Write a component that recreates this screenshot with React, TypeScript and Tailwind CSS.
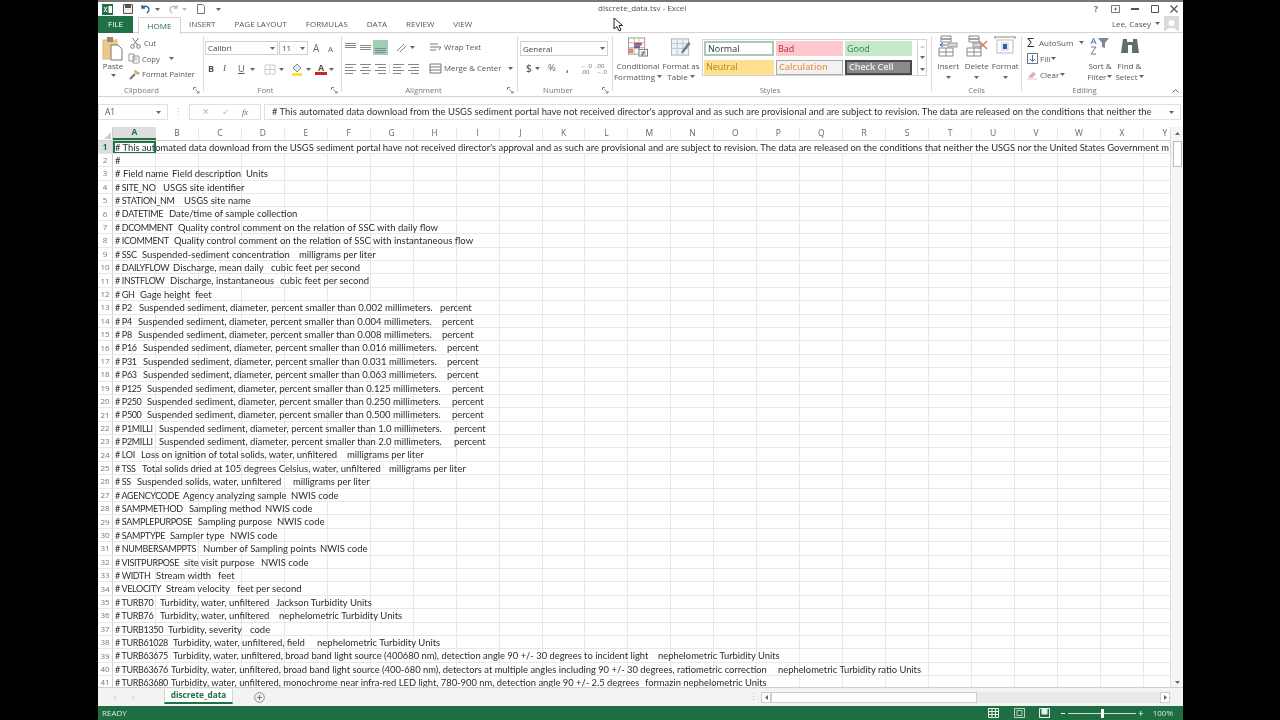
import React from "react";

type Seg = [number, string];
const S = "Suspended sediment, diameter, percent smaller than ";
const ROWS: Seg[][] = [
  [[115, "# This automated data download from the USGS sediment portal have not received director's approval and as such are provisional and are subject to revision. The data are released on the conditions that neither the USGS nor the United States Government m"]],
  [[115, "#"]],
  [[115, "# Field name"], [172, "Field description"], [246, "Units"]],
  [[115, "# SITE_NO"], [163, "USGS site identifier"]],
  [[115, "# STATION_NM"], [184, "USGS site name"]],
  [[115, "# DATETIME"], [169, "Date/time of sample collection"]],
  [[115, "# DCOMMENT"], [178, "Quality control comment on the relation of SSC with daily flow"]],
  [[115, "# ICOMMENT"], [174, "Quality control comment on the relation of SSC with instantaneous flow"]],
  [[115, "# SSC"], [142, "Suspended-sediment concentration"], [299, "milligrams per liter"]],
  [[115, "# DAILYFLOW"], [173, "Discharge, mean daily"], [271, "cubic feet per second"]],
  [[115, "# INSTFLOW"], [170, "Discharge, instantaneous"], [280, "cubic feet per second"]],
  [[115, "# GH"], [140, "Gage height"], [195, "feet"]],
  [[115, "# P2"], [139, S + "0.002 millimeters."], [440, "percent"]],
  [[115, "# P4"], [138, S + "0.004 millimeters."], [442, "percent"]],
  [[115, "# P8"], [138, S + "0.008 millimeters."], [442, "percent"]],
  [[115, "# P16"], [143, S + "0.016 millimeters."], [447, "percent"]],
  [[115, "# P31"], [143, S + "0.031 millimeters."], [447, "percent"]],
  [[115, "# P63"], [143, S + "0.063 millimeters."], [447, "percent"]],
  [[115, "# P125"], [147, S + "0.125 millimeters."], [452, "percent"]],
  [[115, "# P250"], [147, S + "0.250 millimeters."], [452, "percent"]],
  [[115, "# P500"], [147, S + "0.500 millimeters."], [452, "percent"]],
  [[115, "# P1MILLI"], [159, S + "1.0 millimeters."], [454, "percent"]],
  [[115, "# P2MILLI"], [159, S + "2.0 millimeters."], [454, "percent"]],
  [[115, "# LOI"], [141, "Loss on ignition of total solids, water, unfiltered"], [347, "milligrams per liter"]],
  [[115, "# TSS"], [142, "Total solids dried at 105 degrees Celsius, water, unfiltered"], [389, "milligrams per liter"]],
  [[115, "# SS"], [137, "Suspended solids, water, unfiltered"], [293, "milligrams per liter"]],
  [[115, "# AGENCYCODE"], [183, "Agency analyzing sample"], [291, "NWIS code"]],
  [[115, "# SAMPMETHOD"], [189, "Sampling method"], [265, "NWIS code"]],
  [[115, "# SAMPLEPURPOSE"], [198, "Sampling purpose"], [277, "NWIS code"]],
  [[115, "# SAMPTYPE"], [170, "Sampler type"], [230, "NWIS code"]],
  [[115, "# NUMBERSAMPPTS"], [203, "Number of Sampling points"], [320, "NWIS code"]],
  [[115, "# VISITPURPOSE"], [184, "site visit purpose"], [261, "NWIS code"]],
  [[115, "# WIDTH"], [156, "Stream width"], [218, "feet"]],
  [[115, "# VELOCITY"], [166, "Stream velocity"], [237, "feet per second"]],
  [[115, "# TURB70"], [160, "Turbidity, water, unfiltered"], [276, "Jackson Turbidity Units"]],
  [[115, "# TURB76"], [160, "Turbidity, water, unfiltered"], [279, "nephelometric Turbidity Units"]],
  [[115, "# TURB1350"], [168, "Turbidity, severity"], [250, "code"]],
  [[115, "# TURB61028"], [173, "Turbidity, water, unfiltered, field"], [317, "nephelometric Turbidity Units"]],
  [[115, "# TURB63675"], [173, "Turbidity, water, unfiltered, broad band light source (400680 nm), detection angle 90 +/- 30 degrees to incident light"], [658, "nephelometric Turbidity Units"]],
  [[115, "# TURB63676"], [171, "Turbidity, water, unfiltered, broad band light source (400-680 nm), detectors at multiple angles including 90 +/- 30 degrees, ratiometric correction"], [778, "nephelometric Turbidity ratio Units"]],
  [[115, "# TURB63680"], [171, "Turbidity, water, unfiltered, monochrome near infra-red LED light, 780-900 nm, detection angle 90 +/- 2.5 degrees"], [645, "formazin nephelometric Units"]],
];
const COLS = "ABCDEFGHIJKLMNOPQRSTUVWXY".split("");
const FORMULA =
  "# This automated data download from the USGS sediment portal have not received director's approval and as such are provisional and are subject to revision. The data are released on the conditions that neither the";

const Caret = ({ c = "" }: { c?: string }) => (
  <svg width="5" height="3" viewBox="0 0 5 3" className={c}>
    <path d="M0 0h5L2.5 3z" fill="#666" />
  </svg>
);
const Launcher = () => (
  <svg width="7" height="7" viewBox="0 0 7 7">
    <path d="M.5 3V.5H3M2.5 2.5l3.5 3.5M6 4v2H4" stroke="#888" fill="none" />
  </svg>
);
const GroupLabel = ({ t, launcher = true, pr = "pr-[12px]" }: { t: string; launcher?: boolean; pr?: string }) => (
  <div className={`h-[11px] flex items-center justify-center relative text-[7.7px] text-[#777] ${pr}`}>
    <span>{t}</span>
    {launcher && (
      <span className="absolute right-[3px] top-[2px]">
        <Launcher />
      </span>
    )}
  </div>
);
const Sep = () => <div className="w-px h-[86%] bg-[#dcdcdc] self-center shrink-0" />;

const Lines = ({ a, active = false }: { a: "top" | "mid" | "bot" | "l" | "c" | "r"; active?: boolean }) => {
  const y = a === "top" ? [2, 4, 6] : a === "mid" ? [4, 6, 8] : a === "bot" ? [7, 9, 11] : [2, 5, 8, 11];
  const xs = (i: number) => {
    if (a === "l") return [1, i % 2 ? 9 : 12];
    if (a === "c") return i % 2 ? [3, 10] : [1, 12];
    if (a === "r") return [i % 2 ? 4 : 1, 12];
    return [1, 12];
  };
  return (
    <div className={`w-[15px] h-[15px] flex items-center justify-center ${active ? "bg-[#9fd0b6]" : ""}`}>
      <svg width="13" height="13" viewBox="0 0 13 13">
        {y.map((v, i) => (
          <path key={i} d={`M${xs(i)[0]} ${v}.5H${xs(i)[1]}`} stroke="#888" />
        ))}
      </svg>
    </div>
  );
};

function Clipboard() {
  return (
    <div className="w-[105px] shrink-0 flex flex-col">
      <div className="h-[53px] flex">
        <div className="w-[30px] flex flex-col items-center pt-[3px]">
          <svg width="22" height="25" viewBox="0 0 22 25">
            <rect x="1" y="4" width="14" height="19" fill="#eac98a" stroke="#d9b87c" />
            <rect x="5" y="1" width="6" height="5" fill="#a08a68" />
            <path d="M9 9h7l4 4v11H9z" fill="#fff" stroke="#777" />
          </svg>
          <span className="text-[8px] text-[#555] leading-[10px]">Paste</span>
          <Caret c="mt-[3px]" />
        </div>
        <div className="flex flex-col pl-0 pt-[4px] gap-[3.5px] text-[7.6px] text-[#555] leading-[12px]">
          <div className="flex items-center gap-[3px] h-[12px]">
            <svg width="11" height="11" viewBox="0 0 11 11" className="ml-[2px]">
              <path d="M2.5 0l5 7M8.500 0l-5 7" stroke="#777" fill="none" />
              <circle cx="2.500" cy="8.500" r="1.800" stroke="#777" fill="none" />
              <circle cx="8.500" cy="8.500" r="1.800" stroke="#777" fill="none" />
            </svg>
            <span>Cut</span>
          </div>
          <div className="flex items-center gap-[2px] h-[12px]">
            <svg width="12" height="11" viewBox="0 0 12 11">
              <path d="M1 1h5v7H1zM5 3h6v7H5z" fill="#fff" stroke="#999" />
              <path d="M6.500 5h3M6.500 7h3" stroke="#aaa" />
            </svg>
            <span>Copy</span>
            <Caret c="ml-[7px]" />
          </div>
          <div className="flex items-center gap-[1px] h-[12px]">
            <svg width="13" height="11" viewBox="0 0 13 11">
              <path d="M7 1l5 3-2 2-4-3z" fill="#c9a566" />
              <path d="M7 5L2 10" stroke="#777" strokeWidth="2" />
            </svg>
            <span className="whitespace-nowrap">Format Painter</span>
          </div>
        </div>
      </div>
      <GroupLabel t="Clipboard" pr="pr-[18px]" />
    </div>
  );
}

function Font() {
  return (
    <div className="w-[137px] shrink-0 flex flex-col">
      <div className="h-[53px] pl-[1px] pt-[8px]">
        <div className="flex gap-[1px] h-[14px]">
          <div className="w-[73px] border border-[#d0d0d0] flex items-center justify-between px-[2px] text-[8px] text-[#444]">
            <span>Calibri</span>
            <Caret />
          </div>
          <div className="w-[29px] border border-[#d0d0d0] flex items-center justify-between px-[2px] text-[8px] text-[#444]">
            <span>11</span>
            <Caret />
          </div>
          <span className="ml-[4px] w-[14px] text-[10px] leading-[14px] text-[#666]">A</span>
          <span className="w-[11px] text-[8px] leading-[15px] text-[#666]">A</span>
        </div>
        <div className="flex items-center h-[14px] mt-[7px] text-[9px] text-[#555] pl-[3px]">
          <span className="w-[15px] font-bold">B</span>
          <span className="w-[15px] italic" style={{ fontFamily: "'Liberation Serif',serif" }}>I</span>
          <span className="w-[12px] underline">U</span>
          <Caret c="mr-[9px]" />
          <svg width="12" height="11" viewBox="0 0 12 11">
            <path d="M1 1h10v9H1zM6 1v9M1 5.500h10" stroke="#ccc" fill="none" />
          </svg>
          <Caret c="ml-[3px] mr-[6px]" />
          <svg width="14" height="13" viewBox="0 0 14 13">
            <path d="M7 1l4 4-4 4-4-4z" fill="#dfe6ee" stroke="#7a8ea8" />
            <rect x="2" y="10" width="10" height="3" fill="#f2e73a" />
          </svg>
          <Caret c="ml-[2px] mr-[4px]" />
          <div className="flex flex-col items-center w-[12px] text-[#555] font-bold leading-[9px]">
            <span className="text-[9px]">A</span>
            <div className="w-[12px] h-[3px] bg-[#d02020]" />
          </div>
          <Caret c="ml-[2px]" />
        </div>
      </div>
      <GroupLabel t="Font" pr="pr-[14px]" />
    </div>
  );
}

function Alignment() {
  return (
    <div className="w-[175px] shrink-0 flex flex-col">
      <div className="h-[53px] flex pl-[1px] pt-[7px]">
        <div className="flex flex-col gap-[6px] w-[79px]">
          <div className="flex items-center h-[15px]">
            <Lines a="top" />
            <Lines a="mid" />
            <Lines a="bot" active />
            <svg width="13" height="11" viewBox="0 0 13 11" className="ml-[7px]">
              <path d="M2 9l7-7M5 10l6-6" stroke="#8a7aa0" fill="none" />
            </svg>
            <Caret c="ml-[2px]" />
          </div>
          <div className="flex items-center h-[15px]">
            <Lines a="l" />
            <Lines a="c" />
            <Lines a="r" />
            <div className="w-[1px] h-[11px] bg-[#ddd] mx-[1px]" />
            <Lines a="l" />
            <Lines a="r" />
          </div>
        </div>
        <div className="flex flex-col gap-[6px] ml-[7px] text-[7.8px] text-[#555] whitespace-nowrap">
          <div className="flex items-center h-[15px] gap-[2px]">
            <svg width="13" height="11" viewBox="0 0 13 11">
              <path d="M1 2h8M1 5h11M1 8h6" stroke="#777" fill="none" />
              <path d="M10 8l2-3" stroke="#5b84b1" fill="none" />
            </svg>
            <span>Wrap Text</span>
          </div>
          <div className="flex items-center h-[15px] gap-[2px]">
            <svg width="13" height="11" viewBox="0 0 13 11">
              <path d="M1 1h11v9H1zM1 4h11M1 7h11" stroke="#777" fill="none" />
            </svg>
            <span>Merge &amp; Center</span>
            <Caret c="ml-[5px]" />
          </div>
        </div>
      </div>
      <GroupLabel t="Alignment" />
    </div>
  );
}

function NumberGroup() {
  return (
    <div className="w-[94px] shrink-0 flex flex-col">
      <div className="h-[53px] px-[2px] pt-[8px]">
        <div className="h-[15px] w-[88px] border border-[#d0d0d0] flex items-center justify-between px-[2px] text-[8px] text-[#444]">
          <span>General</span>
          <Caret />
        </div>
        <div className="flex items-center h-[15px] mt-[5px] pl-[6px] text-[#666]">
          <span className="text-[10px] font-semibold w-[9px]">$</span>
          <Caret c="mr-[8px]" />
          <span className="text-[9.5px] w-[18px]">%</span>
          <span className="text-[10px] w-[15px] font-bold">,</span>
          <span className="text-[6px] leading-[6px] w-[15px]">
            ←.0
            <br />
            .00
          </span>
          <span className="text-[6px] leading-[6px]">
            .00
            <br />
            →.0
          </span>
        </div>
      </div>
      <GroupLabel t="Number" pr="pr-[14px]" launcher />
    </div>
  );
}

const StyleCell = ({ t, c }: { t: string; c: string }) => (
  <div className={`h-[15px] flex items-center px-[2px] text-[9px] ${c}`}>{t}</div>
);

function Styles() {
  return (
    <div className="w-[318px] shrink-0 flex flex-col">
      <div className="h-[53px] flex pl-[3px] pt-[4px] text-[8px] text-[#555]">
        <div className="w-[44px] flex flex-col items-center leading-[11px]">
          <svg width="22" height="20" viewBox="0 0 22 21">
            <rect x="1" y="1" width="17" height="17" fill="#fff" stroke="#999" />
            <path d="M1 6h17M1 11h17M7 1v17M12 1v17" stroke="#bbb" />
            <rect x="7" y="6" width="8" height="3" fill="#c0504d" />
            <rect x="7" y="9" width="6" height="3" fill="#4f6db0" />
            <rect x="1" y="12" width="5" height="5" fill="#d98880" />
            <rect x="12" y="13" width="9" height="7" fill="#fff" stroke="#777" />
            <path d="M14 16h5M14 18h5M15 20l3-6" stroke="#444" strokeWidth=".7" />
          </svg>
          <span className="mt-[3px] whitespace-nowrap">Conditional</span>
          <span className="flex items-center gap-[2px] whitespace-nowrap">Formatting <Caret /></span>
        </div>
        <div className="w-[41px] flex flex-col items-center leading-[11px] pl-[1px]">
          <svg width="22" height="20" viewBox="0 0 22 21">
            <rect x="1" y="2" width="18" height="17" fill="#eef2f6" stroke="#a5b4c3" />
            <path d="M1 7h18M1 12h18M7 2v17M13 2v17" stroke="#b6c4d1" />
            <path d="M11 16l8-11 2 2-8 10z" fill="#6a7a8a" />
          </svg>
          <span className="mt-[3px] whitespace-nowrap">Format as</span>
          <span className="flex items-center gap-[2px] whitespace-nowrap">Table <Caret /></span>
        </div>
        <div className="ml-[1px] w-[225px] h-[37px] mt-[2px] border border-[#d4d4d4] flex pl-[1px] pt-[1px]">
          <div className="grid grid-cols-[70px_67px_67px] gap-x-[2px] gap-y-[3px] w-[210px]">
            <StyleCell t="Normal" c="bg-white border-2 border-[#a9c9b9] text-[#333]" />
            <StyleCell t="Bad" c="bg-[#ffc7ce] text-[#b5303f]" />
            <StyleCell t="Good" c="bg-[#c6e9cc] text-[#2f8548]" />
            <StyleCell t="Neutral" c="bg-[#ffe08f] text-[#b58122]" />
            <StyleCell t="Calculation" c="bg-[#f2f2f2] border border-[#a9a9a9] text-[#e89a55] font-semibold" />
            <StyleCell t="Check Cell" c="bg-[#8a8a8a] border-2 border-[#4a4a4a] text-[#eee] font-semibold" />
          </div>
          <div className="ml-[3px] w-[9px] flex flex-col border-l border-[#d4d4d4] items-center justify-around">
            <Caret c="rotate-180 opacity-30" />
            <Caret />
            <Caret />
          </div>
        </div>
      </div>
      <GroupLabel t="Styles" launcher={false} pr="pr-[4px]" />
    </div>
  );
}

const CellBtn = ({ t, children }: { t: string; children: React.ReactNode }) => (
  <div className="w-[28.5px] flex flex-col items-center leading-[10px] text-[8px] text-[#555]">
    <div className="h-[22px] flex items-end">{children}</div>
    <span className="mt-[4px]">{t}</span>
    <Caret c="mt-[5px]" />
  </div>
);

function Cells() {
  const grid = "M1 13h14v8H1zM1 17h14M8 13v8";
  return (
    <div className="w-[89px] shrink-0 flex flex-col">
      <div className="h-[53px] flex pl-[2px] pt-[2px]">
        <CellBtn t="Insert">
          <svg width="20" height="22" viewBox="0 0 20 22">
            <path d={grid} stroke="#888" fill="none" />
            <path d="M3 1h10v3H3zM3 4h10v3H3z" stroke="#888" fill="none" />
            <path d="M2 10h7M2 10l3-2M2 10l3 2" stroke="#3a6ea5" fill="none" />
            <rect x="10" y="8" width="9" height="4" fill="#cfd8e0" stroke="#999" />
          </svg>
        </CellBtn>
        <CellBtn t="Delete">
          <svg width="22" height="22" viewBox="0 0 22 22">
            <path d={grid} stroke="#888" fill="none" />
            <path d="M3 1h10v3H3zM3 4h10v3H3z" stroke="#888" fill="none" />
            <rect x="7" y="8" width="8" height="4" fill="#cfd8e0" stroke="#999" />
            <path d="M13 6l8 8M21 6l-8 8" stroke="#d9785f" strokeWidth="1.500" fill="none" />
          </svg>
        </CellBtn>
        <CellBtn t="Format">
          <svg width="22" height="22" viewBox="0 0 22 22">
            <path d="M1 2h20M1 1v3M21 1v3" stroke="#888" fill="none" />
            <rect x="3" y="5" width="16" height="13" fill="#fff" stroke="#bbb" />
            <rect x="7" y="7" width="8" height="9" fill="#dbe6f1" />
            <rect x="9" y="9" width="4" height="5" fill="#2f5fa0" />
          </svg>
        </CellBtn>
      </div>
      <GroupLabel t="Cells" launcher={false} pr="pr-0" />
    </div>
  );
}

function Editing() {
  return (
    <div className="flex-1 flex flex-col relative">
      <div className="h-[53px] flex pl-[5px] pt-[3px] text-[8px] text-[#555]">
        <div className="w-[58px] flex flex-col gap-[3px] leading-[12px]">
          <div className="flex items-center h-[13px] gap-[1px]">
            <span className="text-[13px] w-[11px] text-[#333] leading-[13px]">Σ</span>
            <span>AutoSum</span>
            <Caret c="ml-[5px]" />
          </div>
          <div className="flex items-center h-[13px] gap-[1px]">
            <svg width="11" height="11" viewBox="0 0 11 11">
              <rect x=".5" y=".5" width="10" height="10" fill="#fff" stroke="#777" />
              <path d="M5.500 2v6M3 6l2.500 2.500L8 6" stroke="#2f6fb0" fill="none" />
            </svg>
            <span className="ml-[1px]">Fill</span>
            <Caret />
          </div>
          <div className="flex items-center h-[13px] gap-[1px]">
            <svg width="11" height="11" viewBox="0 0 11 11">
              <path d="M1 8l5-5 3 2-4 4z" fill="#eaa3b0" />
              <path d="M0 10h10" stroke="#ccc" />
            </svg>
            <span className="ml-[1px]">Clear</span>
            <Caret />
          </div>
        </div>
        <div className="w-[30px] flex flex-col items-center leading-[11px]">
          <svg width="22" height="20" viewBox="0 0 22 20">
            <path d="M9 2h11l-4 5v5l-3-1V7z" fill="#7b8a99" />
            <path d="M2 8l2.500-6L7 8M3 6h3" stroke="#3a7fc1" fill="none" />
            <path d="M2 11h5l-5 7h5" stroke="#777" fill="none" />
          </svg>
          <span className="mt-[4px] whitespace-nowrap">Sort &amp;</span>
          <span className="flex items-center gap-[1px] whitespace-nowrap">Filter <Caret /></span>
        </div>
        <div className="w-[29px] flex flex-col items-center leading-[11px]">
          <svg width="20" height="20" viewBox="0 0 20 20">
            <path d="M3 3h4v3h6V3h4l2 14h-7V9H8v8H1z" fill="#5f6f66" />
          </svg>
          <span className="mt-[4px] whitespace-nowrap">Find &amp;</span>
          <span className="flex items-center gap-[1px] whitespace-nowrap">Select <Caret /></span>
        </div>
      </div>
      <GroupLabel t="Editing" launcher={false} pr="pr-[36px]" />
      <svg width="7" height="4" viewBox="0 0 7 4" className="absolute right-[4px] bottom-[3px]">
        <path d="M.5 3.500l3-3 3 3" stroke="#666" fill="none" />
      </svg>
    </div>
  );
}

function Grid() {
  return (
    <div className="h-[560.5px] flex shrink-0 overflow-hidden">
      <div className="w-[1072px] shrink-0 flex flex-col overflow-hidden">
        <div className="flex h-[14px] shrink-0 bg-white text-[8.5px] text-[#666] border-b border-[#cfcfcf]">
          <div className="w-[15px] shrink-0 border-r border-[#cfcfcf] flex items-end justify-end pr-px pb-px">
            <svg width="7" height="7" viewBox="0 0 7 7"><path d="M7 0v7H0z" fill="#ccc" /></svg>
          </div>
          {COLS.map((c, i) => (
            <div
              key={c}
              className={`w-[42.96px] shrink-0 flex items-center justify-center ${
                i === 0 ? "bg-[#dedede] text-[#1f6e43] font-bold border-b-2 border-[#1f7246]" : "border-r border-[#e8e8e8]"
              }`}
            >
              {c}
            </div>
          ))}
        </div>
        {ROWS.map((segs, i) => (
          <div key={i} className="flex h-[13.4px] shrink-0 border-b border-[#e8e8e8] bg-white">
            <div
              className={`w-[15px] shrink-0 flex items-center justify-center text-[8px] border-r border-[#cfcfcf] ${
                i === 0 ? "bg-[#dedede] text-[#1f6e43] font-bold" : "text-[#777]"
              }`}
            >
              {i + 1}
            </div>
            <div className="flex-1 relative overflow-hidden flex">
              {COLS.map((c) => (
                <div key={c} className={`w-[42.96px] shrink-0 ${i < 1 ? "" : "border-r border-[#e8e8e8]"}`} />
              ))}
              <div
                className={`absolute left-[2px] top-0 whitespace-pre leading-[13px] text-[#2c2c2c] ${
                  i === 0 || i >= 38 ? "text-[9.4px]" : "text-[9.5px]"
                }`}
                style={{ fontFamily: "Lato, sans-serif" }}
              >
                {segs.map((s, k) => (
                  <span
                    key={k}
                    className={`inline-block ${k === 0 && i >= 3 ? "text-[9px] tracking-[-0.35px]" : ""}`}
                    style={k < segs.length - 1 ? { width: segs[k + 1][0] - s[0] } : undefined}
                  >
                    {s[1]}
                  </span>
                ))}
              </div>
              {i === 0 && (
                <div className="absolute left-0 top-0 w-[43px] h-[13.4px] border-2 border-[#1f7246]" />
              )}
            </div>
          </div>
        ))}
      </div>
      <div className="flex-1 flex flex-col items-center bg-[#f6f6f6] border-l border-[#dcdcdc]">
        <div className="h-[14px] w-full flex items-center justify-center">
          <Caret c="rotate-180" />
        </div>
        <div className="w-[9px] h-[26px] bg-white border border-[#bbb]" />
        <div className="flex-1" />
        <Caret c="mb-[3px]" />
      </div>
    </div>
  );
}

export default function App() {
  return (
    <div className="w-[1280px] h-[720px] bg-black relative overflow-hidden flex justify-center" style={{ fontFamily: "'Open Sans', sans-serif" }}>
      <div className="w-[1085px] h-[720px] ml-[1px] flex flex-col bg-white blur-[0.35px]">
        <div className="h-[16px] shrink-0 border-t-2 border-[#777] flex items-center relative text-[#666]">
          <div className="flex items-center pl-[4px]">
            <svg width="11" height="11" viewBox="0 0 11 11">
              <rect width="11" height="11" fill="#1f7246" />
              <path d="M2 3l3 5M5 3L2 8" stroke="#fff" fill="none" />
              <rect x="6.500" y="2" width="3.500" height="7" fill="#fff" />
            </svg>
            <svg width="10" height="10" viewBox="0 0 10 10" className="ml-[10px]">
              <path d="M.5.5h9v9h-9z" fill="#eee" stroke="#555" />
              <rect x="2" y="1" width="6" height="3" fill="#555" />
            </svg>
            <svg width="12" height="10" viewBox="0 0 12 10" className="ml-[7px]">
              <path d="M2 1v3h3M2 4c2-3 7-2 7 2 0 1-1 2-2 3" stroke="#2a5d8a" strokeWidth="1.300" fill="none" />
            </svg>
            <Caret c="ml-[3px]" />
            <svg width="12" height="10" viewBox="0 0 12 10" className="opacity-40 ml-[7px]">
              <path d="M10 1v3H7M10 4C8 1 3 2 3 6c0 1 1 2 2 3" stroke="#555" strokeWidth="1.300" fill="none" />
            </svg>
            <Caret c="ml-[3px] opacity-40" />
            <svg width="8" height="10" viewBox="0 0 8 10" className="ml-[10px]">
              <path d="M.5.500h5l2 2v7h-7z" fill="#fff" stroke="#777" />
            </svg>
            <Caret c="ml-[11px]" />
          </div>
          <span className="absolute left-[500px] top-[-2px] text-[8px] leading-[15px] text-[#555]">discrete_data.tsv - Excel</span>
          <div className="ml-auto flex items-center pr-[5px] text-[8.5px]">
            <span className="font-bold">?</span>
            <svg width="9" height="8" viewBox="0 0 9 8" className="ml-[13px]"><path d="M.5.500h8v7h-8zM4.500 2.500v3M3 4h3" stroke="#777" fill="none" /></svg>
            <svg width="8" height="2" viewBox="0 0 8 2" className="ml-[11px]"><path d="M0 1h8" stroke="#555" strokeWidth="2" /></svg>
            <svg width="8" height="8" viewBox="0 0 8 8" className="ml-[12px]"><path d="M.5.500h7v7h-7z" stroke="#555" fill="none" /></svg>
            <svg width="8" height="8" viewBox="0 0 8 8" className="ml-[11px]"><path d="M.5.500l7 7M7.500.500l-7 7" stroke="#555" strokeWidth="1.300" /></svg>
          </div>
        </div>
        <div className="h-[17px] shrink-0 flex items-center text-[8px] text-[#555] border-b border-[#d4d4d4]">
          <div className="w-[35px] h-[17px] bg-[#1f7246] text-white flex items-center justify-center">FILE</div>
          <div className="ml-[5px] w-[43px] h-[17px] bg-white border-x border-t border-[#d4d4d4] flex items-center justify-center text-[#1f6e43] relative top-px">HOME</div>
          <span className="ml-[8px]">INSERT</span>
          <span className="ml-[19px]">PAGE LAYOUT</span>
          <span className="ml-[19px]">FORMULAS</span>
          <span className="ml-[19px]">DATA</span>
          <span className="ml-[19px]">REVIEW</span>
          <span className="ml-[19px]">VIEW</span>
          <div className="ml-auto flex items-center gap-[4px] pr-[4px] -mt-[1px]">
            <span>Lee, Casey</span>
            <Caret />
            <div className="w-[15px] h-[15px] bg-[#d9d9d9] flex items-end justify-center">
              <svg width="13" height="13" viewBox="0 0 13 13"><circle cx="6.500" cy="5" r="3" fill="#fff" /><path d="M1 13c0-4 11-4 11 0z" fill="#fff" /></svg>
            </div>
          </div>
        </div>
        <div className="h-[64px] shrink-0 flex border-b border-[#d4d4d4] bg-white">
          <Clipboard />
          <Sep />
          <Font />
          <Sep />
          <Alignment />
          <Sep />
          <NumberGroup />
          <Sep />
          <Styles />
          <Sep />
          <Cells />
          <Sep />
          <Editing />
        </div>
        <div className="h-[29.5px] shrink-0 flex items-center text-[8.5px] text-[#555] bg-white pb-[1px] pt-[2px] pr-[2px]">
          <div className="w-[70px] h-[16px] border border-[#e0e0e0] flex items-center justify-between px-[6px]">
            <span>A1</span>
            <Caret />
          </div>
          <span className="w-[21px] text-center text-[#bbb]">⋮</span>
          <div className="w-[72px] h-[16px] border border-[#e0e0e0] flex items-center justify-around px-[6px] text-[#bbb]">
            <span>✕</span>
            <span>✓</span>
            <span className="italic text-[#666]" style={{ fontFamily: "'Liberation Serif',serif" }}>fx</span>
          </div>
          <div className="flex-1 min-w-0 ml-[3px] h-[16px] border border-[#e0e0e0] flex items-center pl-[7px] pr-[6px] justify-between overflow-hidden">
            <span className="whitespace-pre text-[9.45px] text-[#333]" style={{ fontFamily: "Lato, sans-serif" }}>{FORMULA}</span>
            <Caret c="shrink-0" />
          </div>
        </div>
        <Grid />
        <div className="flex-1 flex items-center bg-[#f3f3f3] border-t border-[#cfcfcf] min-h-0">
          <div className="w-[66px] flex text-[#bbb] text-[9px] pl-[16px]">
            <span className="w-[18px]">‹</span>
            <span>›</span>
          </div>
          <div className="w-[69px] h-[15px] -mt-[1px] bg-white border-x border-b-2 border-[#d4d4d4] border-b-[#1f7246] text-[#1f7246] font-bold text-[8.3px] flex items-center justify-center">discrete_data</div>
          <svg width="11" height="11" viewBox="0 0 11 11" className="ml-[21px]">
            <circle cx="5.500" cy="5.500" r="4.800" fill="none" stroke="#888" />
            <path d="M5.500 3v5M3 5.500h5" stroke="#777" />
          </svg>
          <span className="ml-[484px] w-[12px] text-[#bbb] text-[9px]">⋮</span>
          <div className="w-[10px] h-[11px] border border-[#ccc] bg-white flex items-center justify-center"><Caret c="rotate-90" /></div>
          <div className="w-[206px] h-[11px] bg-white border border-[#cfcfcf]" />
          <div className="flex-1 h-[11px] bg-[#e9e9e9]" />
          <div className="w-[10px] h-[11px] border border-[#ccc] bg-white mr-[13px] flex items-center justify-center"><Caret c="-rotate-90" /></div>
        </div>
        <div className="h-[14px] shrink-0 bg-[#1f6e43] text-[#d8e8df] text-[8px] flex items-center pl-[4px] pr-[10px]">
          <span>READY</span>
          <div className="ml-auto flex items-center">
            <svg width="11" height="10" viewBox="0 0 11 10"><path d="M.5.500h10v9H.5zM4 .5v9M7.500.5v9M.5 3.500h10M.5 6.500h10" stroke="#e8f0ec" fill="none" /></svg>
            <svg width="11" height="10" viewBox="0 0 11 10" className="ml-[15px]"><path d="M.5.500h10v9H.5zM3 2.500h5v5H3z" stroke="#bcd2c6" fill="none" /></svg>
            <svg width="11" height="10" viewBox="0 0 11 10" className="ml-[14px]"><path d="M.5.500h10v9H.5z" stroke="#e8f0ec" fill="none" /><rect x="2.500" y="0.500" width="6" height="6" fill="#e8f0ec" /></svg>
            <div className="flex items-center ml-[11px]">
              <span className="w-[4px] h-[1px] bg-white mr-[3px]" />
              <div className="w-[68px] h-[1px] bg-[#cde0d5] relative">
                <span className="absolute left-[33px] top-[-4px] w-[3px] h-[9px] bg-white" />
              </div>
              <span className="ml-[2px] text-[10px] leading-[10px] text-white">+</span>
            </div>
            <span className="ml-[9px] whitespace-nowrap">100%</span>
          </div>
        </div>
      </div>
      <svg width="10" height="15" viewBox="0 0 10 15" className="absolute left-[613px] top-[17px]">
        <path d="M1 1v11l3-2.500 2 4.500 2-1-2-4.500h3.500z" fill="#fff" stroke="#222" />
      </svg>
    </div>
  );
}
